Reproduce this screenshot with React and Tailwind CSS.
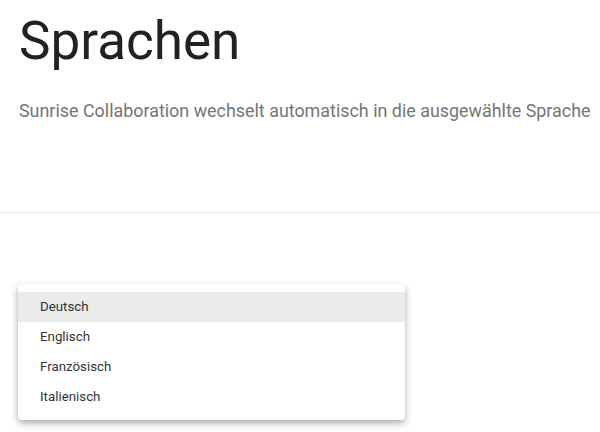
export default function App() {
  const languages = ["Deutsch", "Englisch", "Französisch", "Italienisch"];

  return (
    <div className="w-[600px] h-[432px] bg-white overflow-hidden font-['Roboto',sans-serif]">
      <div className="px-[19px] pt-[15px] h-[212px]">
        <h1 className="text-[53px] leading-[53px] text-[#212121] font-normal">Sprachen</h1>
        <p className="mt-[31px] text-[17.9px] leading-6 text-[#757575] whitespace-nowrap">
          Sunrise Collaboration wechselt automatisch in die ausgewählte Sprache
        </p>
      </div>
      <div className="h-px bg-[#e6e6e6]" />
      <div className="px-[18px] pt-[71px]">
        <ul className="w-[387px] bg-white rounded py-2 shadow-[0_3px_7px_rgba(0,0,0,0.35)]">
          {languages.map((lang, i) => (
            <li
              key={lang}
              className={`h-[30px] flex items-center pl-[22px] text-[13.3px] text-[#333] ${i === 0 ? "bg-[#ebebeb]" : ""}`}
            >
              {lang}
            </li>
          ))}
        </ul>
      </div>
    </div>
  );
}
